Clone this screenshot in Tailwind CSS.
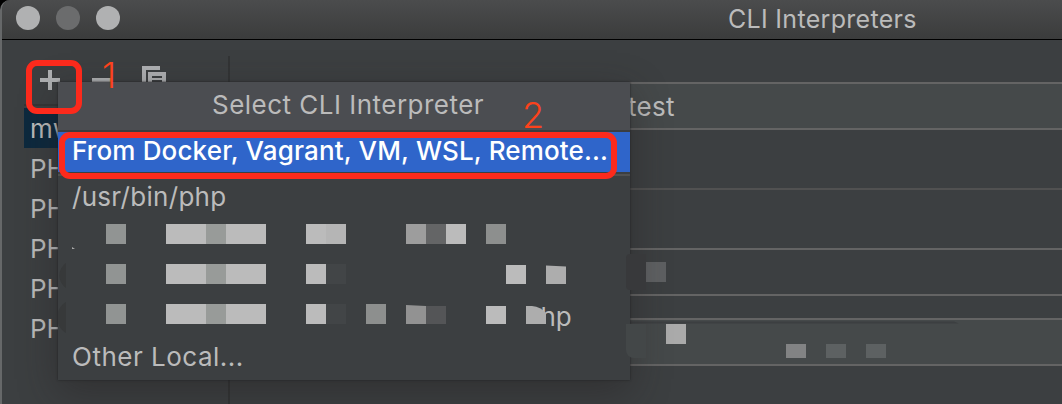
<!DOCTYPE html>
<html lang="en">
<head>
<meta charset="utf-8">
<title>CLI Interpreters</title>
<script src="https://cdn.jsdelivr.net/npm/@tailwindcss/browser@4"></script>
</head>
<body class="bg-black font-['Inter','Liberation_Sans',sans-serif] text-[26px] leading-[40px] text-[#bbbbbb]">
<div class="relative flex h-[404px] w-[1062px] flex-col overflow-hidden rounded-tl-[10px] border-l-2 border-[#666869] bg-[#3c3f41] whitespace-nowrap">
  <header class="flex h-10 shrink-0 border-b border-black bg-linear-to-b from-[#4b4c4d] to-[#3b3c3c]">
    <div class="flex w-[726px] gap-4 pt-1.5 pl-3.5">
      <span class="size-6 rounded-full bg-[#b0b1b2]"></span>
      <span class="size-6 rounded-full bg-[#6b6c6d]"></span>
      <span class="size-6 rounded-full bg-[#b0b1b2]"></span>
    </div>
    <h1 class="-mt-[1px] text-[25px] tracking-[0.3px]">CLI Interpreters</h1>
  </header>

  <div class="flex grow">
    <aside class="w-[226px] shrink-0 pt-6 pl-[22px]">
      <div class="flex h-10">
        <svg width="150" height="40" viewBox="24 64 150 40" fill="#afb1b3" shape-rendering="crispEdges">
          <path d="M48 70h4v8h8v4h-8v8h-4v-8h-8v-4h8z"/>
          <path d="M92 78h20v4H92z"/>
          <path d="M142 66h18v4h-14v16h-4z"/>
          <path fill-rule="evenodd" d="M148 72h18v20h-18zM152 76v2h10v-2zM152 80v2h10v-2z"/>
        </svg>
      </div>
      <div class="h-1 border-t-2 border-[#343637]"></div>
      <ul class="leading-[42px]">
        <li class="h-10 w-20 overflow-hidden bg-[#0d293e] pl-1.5">mw</li>
        <li class="h-10 pl-1.5">PH</li>
        <li class="h-10 pl-1.5">PH</li>
        <li class="h-10 pl-1.5">PH</li>
        <li class="h-10 pl-1.5">PH</li>
        <li class="h-10 pl-1.5">PH</li>
      </ul>
    </aside>
    <main class="mt-4 flex grow flex-col border-l-2 border-[#323435]">
      <div class="mt-[26px] h-12 border-y-2 border-[#646464] bg-[#45494a] pt-[3px] pl-[398px] tracking-[0.3px]">test</div>
      <div class="mt-[58px] h-0.5 bg-[#515151]"></div>
      <div class="mt-[58px] h-12 border-y-2 border-[#646464] pt-3 pl-[398px]">
        <svg class="block" width="40" height="20" shape-rendering="crispEdges"><path d="M0 0h18v20H0z" fill="#38393b"/><path d="M18 0h20v20H18z" fill="#5e6062"/></svg>
      </div>
      <div class="mt-[22px] h-12 border-y-2 border-[#646464] bg-[#45494a]">
        <svg class="block" width="830" height="44" viewBox="230 320 830 44">
          <path d="M628 321.5H954L959 323.5H628z" fill="#3c3f41"/>
          <g shape-rendering="crispEdges">
            <path d="M666 324h20v20h-20z" fill="#aaaaaa"/>
            <path d="M786 344h20v14h-20z" fill="#828384"/>
            <path d="M826 344h20v14h-20zM866 344h20v14h-20z" fill="#5d6162"/>
          </g>
        </svg>
      </div>
    </main>
  </div>

  <!-- Interpreter selection popup -->
  <section class="absolute top-[82px] left-14 h-[298px] w-[572px] bg-[#3c3f41] shadow-[0_0_2px_#202122,0_12px_36px_rgba(35,32,30,0.45)]">
    <h2 class="h-[50px] border-b-2 border-[#3b3d40] bg-[#4b4d51] pt-[3px] pl-[154px] tracking-[0.48px]">Select CLI Interpreter</h2>
    <div class="h-10 bg-[#2f65ca] pl-3.5 leading-[38px] font-medium tracking-[0.15px] text-white">From Docker, Vagrant, VM, WSL, Remote...</div>
    <div class="mt-0.5 h-0.5 bg-[#515151]"></div>
    <div class="h-10 pl-3.5 leading-[42px] tracking-[0.3px]">/usr/bin/php</div>
    <svg class="block" width="572" height="120" viewBox="58 216 572 120">
      <path d="M72 247l3 2h-3z" fill="#aaaaaa"/>
      <path d="M66 263a15 15 0 0 0 0 25zM66 302a18 18 0 0 0 0 31z" fill="#37393a"/>
      <g shape-rendering="crispEdges">
        <path d="M106 224h20v20h-20zM106 264h20v20h-20zM106 304h20v20h-20z" fill="#919493"/>
        <path d="M166 224h100v20H166zM166 264h100v20H166zM166 304h100v20H166zM306 224h20v20h-20zM306 264h20v20h-20zM306 304h20v20h-20zM446 224h20v20h-20zM506 264.500h20v19.500h-20zM486 306h20v18h-20z" fill="#bbbbbb"/>
        <path d="M206 224h20v20h-20zM206 264h20v20h-20zM206 304h20v20h-20z" fill="#989b99"/>
        <path d="M326 224h20v20h-20z" fill="#b5b5b5"/>
        <path d="M326 264h20v20h-20zM326 304h20v20h-20z" fill="#424547"/>
        <path d="M406 224h20v20h-20z" fill="#9d9d9d"/>
        <path d="M426 224h20v20h-20z" fill="#646566"/>
        <path d="M486 224h20v20h-20zM366 304h20v20h-20z" fill="#8d8f8e"/>
        <path d="M426 306h20v18h-20z" fill="#545557"/>
      </g>
      <path d="M406 305l20 1v18h-20z" fill="#929292"/>
      <path d="M546 265.500l20 1V284h-20z" fill="#adadad"/>
      <text x="540.500" y="326" font-size="26" fill="#bbbbbb">hp</text>
      <path d="M536 324h10v4h-10z" fill="#3c3f41"/>
      <path d="M526 306h6q9 1 14 7v11h-20z" fill="#adadad"/>
    </svg>
    <div class="h-10 pl-3.5 leading-[42px] tracking-[0.5px]">Other Local...</div>
  </section>

  <!-- Blurred patches over the popup's right edge -->
  <div class="absolute top-[254px] left-[624px] h-9 w-5 rounded-l-sm bg-[#38393b]"></div>
  <div class="absolute top-[324px] left-[624px] h-[34px] w-5 rounded-bl-lg bg-[#434748]"></div>

  <!-- Numbered step annotations -->
  <div class="absolute top-[60px] left-[23.500px] h-[54px] w-[56.500px] rounded-[11px] border-6 border-[#fc2a1c]"></div>
  <div class="absolute top-[132px] left-[57px] h-[47px] w-[558px] rounded-[11px] border-6 border-[#fc2a1c]"></div>
  <span class="absolute top-[55px] left-[100px] text-[36px] font-light text-[#fc421c]">1</span>
  <span class="absolute top-[95px] left-[520px] text-[36px] font-light text-[#fc421c]">2</span>
</div>
</body>
</html>
